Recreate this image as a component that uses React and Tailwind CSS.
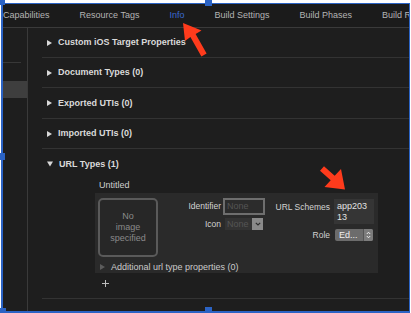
import React from 'react'

const tabs = ['Capabilities', 'Resource Tags', 'Info', 'Build Settings', 'Build Phases', 'Build Rules']

function Disclosure({ open, dim }) {
  if (open) {
    return (
      <svg width="6" height="6" viewBox="0 0 6 6" className="shrink-0">
        <path d="M0 0.5 L6 0.5 L3 5.5 Z" fill="#d8d8d8" />
      </svg>
    )
  }
  return (
    <svg width="5" height="6" viewBox="0 0 5 6" className="shrink-0">
      <path d="M0 0 L5 3 L0 6 Z" fill={dim ? '#5c5c5c' : '#d8d8d8'} />
    </svg>
  )
}

function SectionRow({ title, h }) {
  return (
    <div className={`${h} flex items-center gap-[6px] pl-[5px] border-b border-[#333333]`}>
      <Disclosure />
      <span className="text-[9px] font-bold text-[#dadada] leading-none">{title}</span>
    </div>
  )
}

export default function App() {
  return (
    <div className="relative w-[411px] h-[313px] bg-white overflow-hidden font-['Liberation_Sans',Arial,sans-serif] pt-[3px] pl-[1px] pr-[1px]">
      <div className="h-[310px] flex flex-col bg-[#1e1e1e] border-t border-l-2 border-r border-b-2 border-[#2b63c4]">
        {/* tab bar, last tab runs off the right edge */}
        <div className="h-[24px] shrink-0 flex items-center gap-[30px] border-b border-[#3a3a3a] bg-[#1b1b1b] whitespace-nowrap overflow-hidden">
          {tabs.map(t => (
            <span
              key={t}
              className={`text-[9px] leading-none ${t === 'Info' ? 'text-[#3a6ad0]' : 'text-[#b4b4b4]'}`}
            >
              {t}
            </span>
          ))}
        </div>

        <div className="flex flex-1">
          {/* sidebar */}
          <div className="w-[25px] shrink-0 border-r border-[#3a3a3a] flex flex-col">
            <div className="h-[34px]" />
            <div className="h-px w-[18px] bg-[#383838]" />
            <div className="h-[18px]" />
            <div className="h-[17px] bg-[#3e3e3e]" />
          </div>

          {/* main */}
          <div className="flex-1 flex flex-col pl-[14px]">
            <SectionRow title="Custom iOS Target Properties" h="h-[30px]" />
            <SectionRow title="Document Types (0)" h="h-[30px]" />
            <SectionRow title="Exported UTIs (0)" h="h-[31px]" />
            <SectionRow title="Imported UTIs (0)" h="h-[30px]" />

            <div className="flex flex-col border-b border-[#333333] pb-[5px]">
              <div className="h-[30px] flex items-center gap-[6px] pl-[5px]">
                <Disclosure open />
                <span className="text-[9px] font-bold text-[#dadada] leading-none">URL Types (1)</span>
              </div>

              <div className="ml-[53px] w-[283px] flex flex-col">
                <div className="h-[12px] pl-[4px] text-[9px] leading-[12px] text-[#cfcfcf]">Untitled</div>

                <div className="mt-[2px] h-[80px] bg-[#2a2a2a] flex flex-col">
                  <div className="flex h-[64px]">
                    {/* image well */}
                    <div className="ml-[3px] mt-[5px] w-[60px] h-[59px] shrink-0 rounded-[5px] border-2 border-[#5a5a5a] bg-[#272727] flex items-center justify-center text-center text-[9px] leading-[11px] text-[#8a8a8a]">
                      No<br />image<br />specified
                    </div>

                    {/* identifier / icon */}
                    <div className="mt-[5px] flex flex-col gap-[3px]">
                      <div className="flex items-center gap-[2px] h-[17px]">
                        <span className="w-[63px] text-right text-[8.5px] leading-none text-[#d2d2d2]">Identifier</span>
                        <div className="w-[42px] h-[17px] border-2 border-[#6e6e6e] bg-[#2c2c2c] flex items-center pl-[2px] text-[9px] leading-none text-[#555555]">
                          None
                        </div>
                      </div>
                      <div className="flex items-center gap-[4px] h-[12px]">
                        <span className="w-[63px] text-right text-[8.5px] leading-none text-[#d2d2d2]">Icon</span>
                        <div className="w-[38px] h-[12px] bg-[#333333] flex items-center">
                          <span className="flex-1 pl-[2px] text-[9px] leading-none text-[#555555]">None</span>
                          <div className="w-[11px] h-[12px] bg-[#8a8a8a] flex items-center justify-center">
                            <svg width="6" height="4" viewBox="0 0 6 4">
                              <path d="M0.8 0.8 L3 3 L5.2 0.8" fill="none" stroke="#2e2e2e" strokeWidth="1.2" />
                            </svg>
                          </div>
                        </div>
                      </div>
                    </div>

                    {/* url schemes / role */}
                    <div className="mt-[6px] flex flex-col gap-[5px]">
                      <div className="flex items-start gap-[4px] h-[25px]">
                        <span className="w-[65px] text-right text-[8.5px] leading-[16px] text-[#d2d2d2]">URL Schemes</span>
                        <div className="w-[40px] h-[25px] bg-[#353535] pl-[3px] pt-[2px] text-[9px] leading-[10.5px] text-[#e2e2e2]">
                          app203<br />13
                        </div>
                      </div>
                      <div className="flex items-center gap-[5px] h-[12px]">
                        <span className="w-[65px] text-right text-[8.5px] leading-none text-[#d2d2d2]">Role</span>
                        <div className="w-[38px] h-[12px] rounded-[2px] bg-[#6c6c6c] flex items-center overflow-hidden">
                          <span className="flex-1 pl-[4px] text-[9px] leading-none text-[#f0f0f0]">Ed...</span>
                          <div className="w-[10px] h-[12px] bg-[#7c7c7c] border-l border-[#555555] flex items-center justify-center">
                            <svg width="5" height="8" viewBox="0 0 5 8">
                              <path d="M0.8 3 L2.5 1.2 L4.2 3 M0.8 5 L2.5 6.8 L4.2 5" fill="none" stroke="#eeeeee" strokeWidth="1" />
                            </svg>
                          </div>
                        </div>
                      </div>
                    </div>
                  </div>

                  <div className="mt-[4px] h-[12px] flex items-center gap-[6px] pl-[5px]">
                    <Disclosure dim />
                    <span className="text-[9px] leading-none text-[#cacaca]">Additional url type properties (0)</span>
                  </div>
                </div>

                <div className="h-[20px] flex items-center pl-[7px]">
                  <svg width="7" height="7" viewBox="0 0 7 7">
                    <path d="M3.5 0 V7 M0 3.5 H7" stroke="#bdbdbd" strokeWidth="1" />
                  </svg>
                </div>
              </div>
            </div>
          </div>
        </div>
      </div>

      {/* selection handles */}
      <div className="absolute left-0 top-0 w-[5px] h-[5px] bg-[#2b63c4]" />
      <div className="absolute left-[205px] top-0 w-[7px] h-[6px] bg-[#2b63c4]" />
      <div className="absolute left-0 top-[153px] w-[5px] h-[7px] bg-[#2b63c4]" />
      <div className="absolute left-0 top-[308px] w-[6px] h-[5px] bg-[#2b63c4]" />
      <div className="absolute left-[205px] top-[307px] w-[7px] h-[6px] bg-[#2b63c4]" />

      {/* red annotation arrows */}
      <svg className="absolute left-0 top-0 pointer-events-none" width="411" height="313" viewBox="0 0 411 313">
        <polygon
          points="183,23 201.5,30.5 195.6,34 206.6,53.5 201.4,56.5 190.4,37 185,41"
          fill="#ff3b1c"
        />
        <polygon
          points="345,189.5 324.5,187 330.7,180.2 320,170.7 324,166.3 334.7,175.8 341,169"
          fill="#ff3b1c"
        />
      </svg>
    </div>
  )
}
